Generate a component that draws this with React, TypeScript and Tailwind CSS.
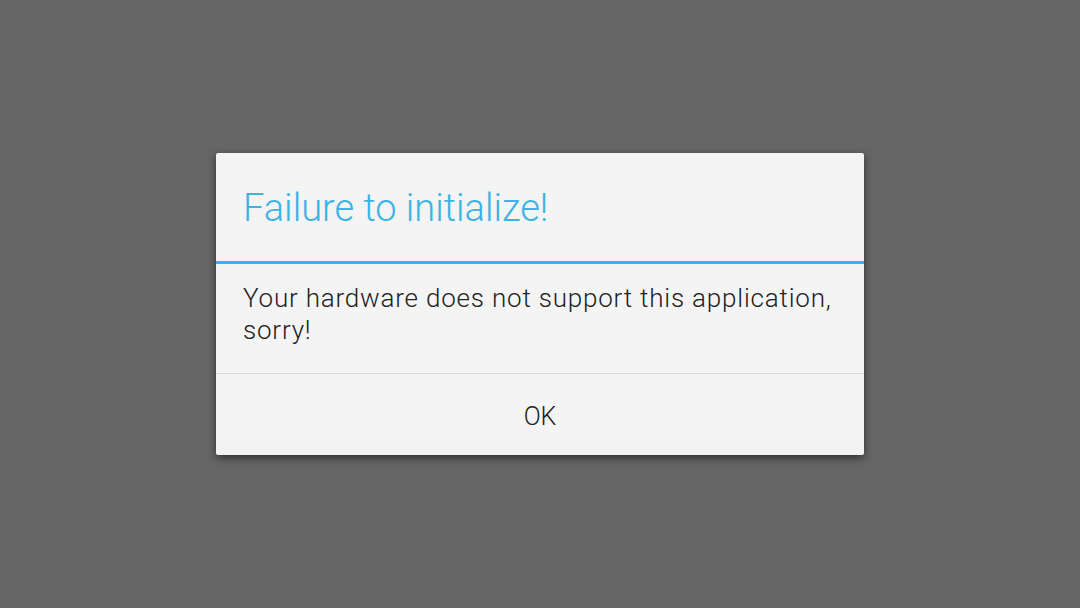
export default function App() {
  return (
    <div className="flex h-[608px] w-full items-center justify-center bg-[#666666] font-['Roboto',sans-serif]">
      <div className="flex w-[648px] flex-col rounded-[2px] bg-[#f4f4f4] shadow-[0_3px_8px_rgba(0,0,0,0.55)]">
        <div className="flex h-[108px] items-center px-[27px]">
          <h1 className="pt-[2px] text-[38px] font-light leading-none text-[#3db3e3]">Failure to initialize!</h1>
        </div>
        <div className="h-[3px] bg-[#33b5e5]" />
        <div className="h-[109px] px-[27px] pt-[18px]">
          <p className="text-[26px] font-light leading-[32px] tracking-[0.8px] text-[#222222]">
            Your hardware does not support this application, sorry!
          </p>
        </div>
        <div className="h-px bg-[#d8d8d8]" />
        <button className="flex h-[81px] items-center justify-center pt-[4px] text-[25px] font-light text-[#222222]">OK</button>
      </div>
    </div>
  );
}
